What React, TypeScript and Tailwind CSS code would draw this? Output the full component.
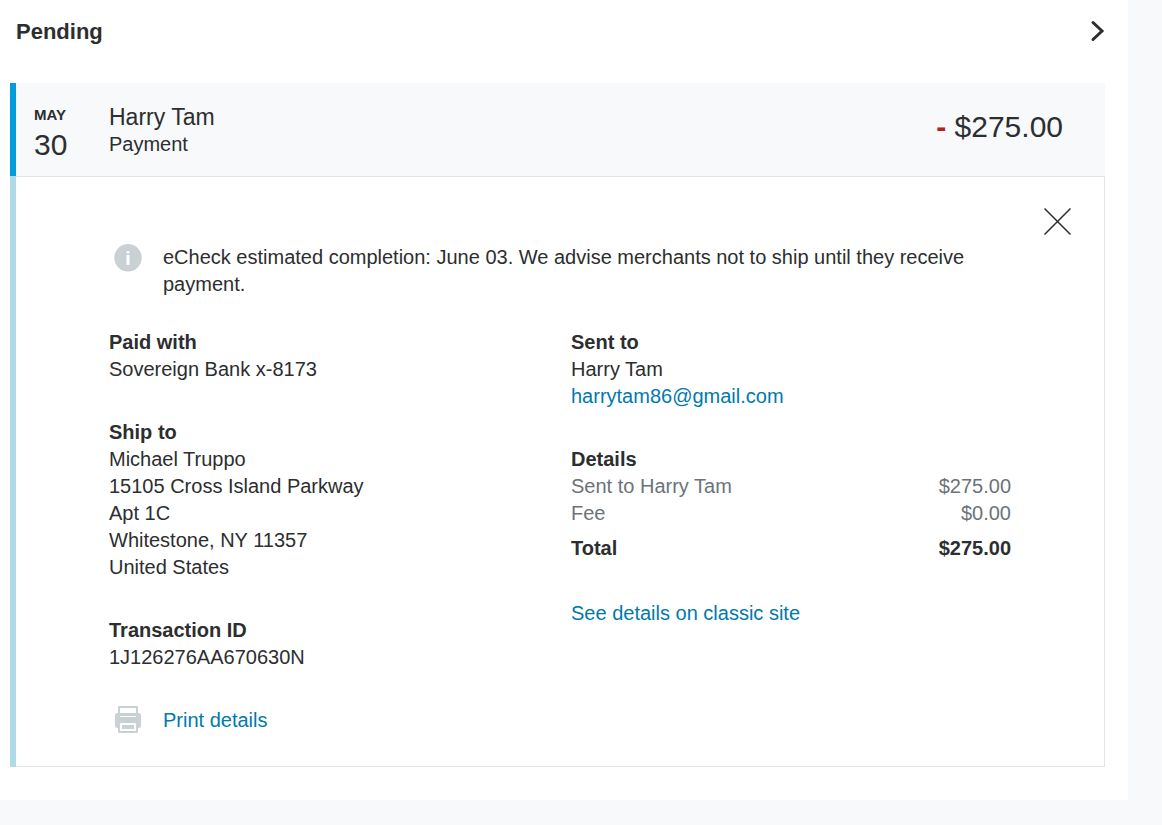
import type { ReactNode } from 'react';

const address = [
  'Michael Truppo',
  '15105 Cross Island Parkway',
  'Apt 1C',
  'Whitestone, NY 11357',
  'United States',
];

const charges = [
  { label: 'Sent to Harry Tam', amount: '$275.00' },
  { label: 'Fee', amount: '$0.00' },
];

function ChevronIcon() {
  return (
    <svg width="15" height="23" viewBox="0 0 15 23" fill="none" aria-hidden="true">
      <path d="M3 2.5l9 8.500-9 8.500" stroke="currentColor" strokeWidth="3" strokeLinecap="round" />
    </svg>
  );
}

function CloseIcon() {
  return (
    <svg width="27" height="27" viewBox="0 0 27 27" fill="none" aria-hidden="true">
      <path d="M.5.5l26 26M26.500.5l-26 26" stroke="currentColor" strokeWidth="1.5" />
    </svg>
  );
}

function InfoIcon() {
  return (
    <svg width="28" height="28" viewBox="0 0 28 28" aria-hidden="true">
      <circle cx="14" cy="13.700" r="13.700" fill="#c9d1d5" />
      <rect x="12.500" y="7" width="3" height="2.500" rx="1" fill="#fff" />
      <rect x="12.500" y="11" width="3" height="10" rx="1" fill="#fff" />
    </svg>
  );
}

function PrinterIcon() {
  return (
    <svg className="-my-1 shrink-0" width="28" height="32" viewBox="0 0 28 32" aria-hidden="true">
      <path d="M5 10V2h18v8" fill="none" stroke="#c9d1d5" strokeWidth="2" strokeLinejoin="round" />
      <rect x="1" y="8" width="26" height="15" rx="2.500" fill="#c9d1d5" />
      <rect x="6" y="11" width="16" height="1" fill="#fff" />
      <rect x="4" y="17" width="20" height="11" rx="1.500" fill="#c9d1d5" />
      <rect x="6" y="18" width="16" height="8" fill="#fff" />
      <rect x="8" y="20" width="12" height="4" fill="#c9d1d5" />
    </svg>
  );
}

function Section({ title, children }: { title: string; children: ReactNode }) {
  return (
    <section>
      <h3 className="font-bold">{title}</h3>
      {children}
    </section>
  );
}

export default function App() {
  return (
    <div className="min-h-screen bg-[#f7f9fb] pr-[34px] font-['Liberation_Sans',Arial,sans-serif] text-xl leading-[27px] text-[#2c2e2f]">
      <main className="bg-white pr-[23px] pb-[33px] pl-[10px]">
        <header className="flex items-center justify-between pt-[18px] pb-[38px] pl-[6px]">
          <h1 className="text-[22px] font-bold">Pending</h1>
          <button type="button" aria-label="Show pending">
            <ChevronIcon />
          </button>
        </header>

        {/* Summary row */}
        <div className="flex items-start border-l-[6px] border-[#009cde] bg-[#f7f9fb] pt-[20px] pr-[42px] pb-[14px] pl-[18px]">
          <div className="flex w-[75px] flex-col">
            <span className="text-[15px] leading-6 font-bold">MAY</span>
            <span className="text-[30px] leading-[35px]">30</span>
          </div>
          <div className="flex-1">
            <h2 className="text-[23px] leading-7">Harry Tam</h2>
            <p>Payment</p>
          </div>
          <p className="text-[30px] leading-[48px]">
            <span className="font-bold text-[#b1221c]">-</span> $275.00
          </p>
        </div>

        {/* Expanded details */}
        <div className="border-l-[6px] border-[#b0d9ea]">
          <div className="border-t border-r border-b border-[#dfe5ea] pt-[31px] pb-8">
            <div className="flex justify-end pr-[33px]">
              <button type="button" aria-label="Close details">
                <CloseIcon />
              </button>
            </div>

            <div className="px-[93px] pt-[9px]">
              <div className="flex gap-[21px] pr-10 pl-[5px]">
                <span className="shrink-0">
                  <InfoIcon />
                </span>
                <p>
                  eCheck estimated completion: June 03. We advise merchants not to ship until they receive payment.
                </p>
              </div>

              <div className="grid grid-cols-2 gap-[22px] pt-[31px]">
                <div className="flex flex-col gap-9">
                  <Section title="Paid with">
                    <p>Sovereign Bank x-8173</p>
                  </Section>
                  <Section title="Ship to">
                    {address.map((line) => (
                      <p key={line}>{line}</p>
                    ))}
                  </Section>
                  <Section title="Transaction ID">
                    <p>1J126276AA670630N</p>
                  </Section>
                  <a href="#print" className="flex items-center gap-[21px] pl-[5px] text-[#0079ad]">
                    <PrinterIcon />
                    Print details
                  </a>
                </div>

                <div className="flex flex-col gap-9">
                  <Section title="Sent to">
                    <p>Harry Tam</p>
                    <a href="mailto:harrytam86@gmail.com" className="text-[#0079ad]">
                      harrytam86@gmail.com
                    </a>
                  </Section>
                  <Section title="Details">
                    <table className="w-full">
                      <tbody className="text-[#6c7378]">
                        {charges.map((charge) => (
                          <tr key={charge.label}>
                            <td>{charge.label}</td>
                            <td className="text-right">{charge.amount}</td>
                          </tr>
                        ))}
                      </tbody>
                      <tfoot className="font-bold">
                        <tr>
                          <td className="pt-2 pb-0.5">Total</td>
                          <td className="pt-2 pb-0.5 text-right">$275.00</td>
                        </tr>
                      </tfoot>
                    </table>
                  </Section>
                  <a href="#classic" className="text-[#0079ad]">
                    See details on classic site
                  </a>
                </div>
              </div>
            </div>
          </div>
        </div>
      </main>
    </div>
  );
}
